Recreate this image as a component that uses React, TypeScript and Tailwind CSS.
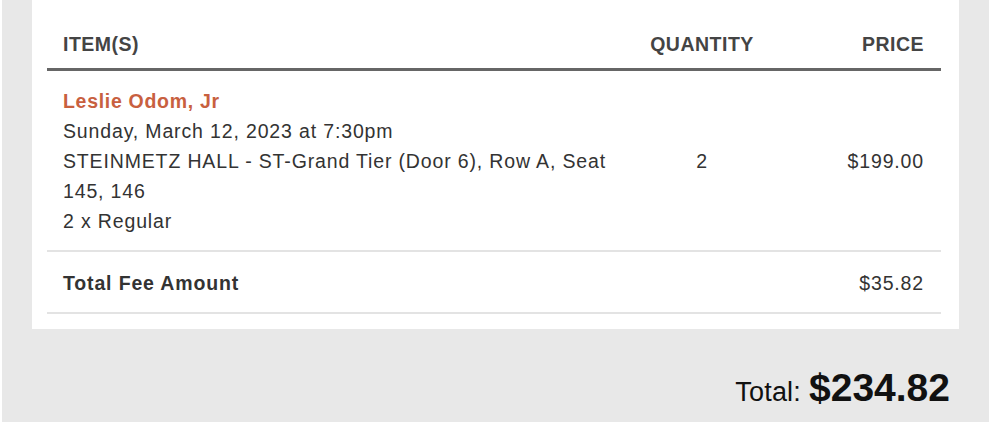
import React from "react";

const body = "text-[19.5px] leading-[30px] tracking-[0.85px] text-[#333]";

export default function App() {
  return (
    <div className="w-[1000px] h-[422px] bg-white pl-[2px] pr-[11px] font-['Liberation_Sans',Arial,sans-serif]">
      <div className="h-full bg-[#e8e8e8] px-[30px] flex flex-col">
        {/* Order card */}
        <div className="bg-white pl-[15px] pr-[18px] pb-[15px]">
          {/* Header */}
          <div className="grid grid-cols-[558px_162px_1fr] pl-[16px] pr-[17px] pt-[32px] pb-[12px] border-b-[3px] border-[#666] text-[19.5px] leading-[24px] tracking-[0.5px] font-bold text-[#444]">
            <div>ITEM(S)</div>
            <div className="text-center">QUANTITY</div>
            <div className="text-right">PRICE</div>
          </div>

          {/* Ticket row */}
          <div className="grid grid-cols-[558px_162px_1fr] items-center pl-[16px] pr-[17px] pt-[15px] pb-[14px] border-b-2 border-[#e3e3e3]">
            <div className={body}>
              <div className="font-bold text-[#c8603f] tracking-[0.7px]">Leslie Odom, Jr</div>
              <div>Sunday, March 12, 2023 at 7:30pm</div>
              <div>STEINMETZ HALL - ST-Grand Tier (Door 6), Row A, Seat 145, 146</div>
              <div>2 x Regular</div>
            </div>
            <div className={`${body} text-center`}>2</div>
            <div className={`${body} text-right tracking-[0.3px]`}>$199.00</div>
          </div>

          {/* Fees */}
          <div className="flex items-center justify-between pl-[16px] pr-[17px] pt-[16px] pb-[14px] border-b-2 border-[#e3e3e3]">
            <div className={`${body} font-bold text-[#222] tracking-[0.6px]`}>Total Fee Amount</div>
            <div className={`${body} tracking-[0.3px]`}>$35.82</div>
          </div>
        </div>

        {/* Grand total */}
        <div className="flex justify-end pr-[9px] pt-[39px]">
          <div className="flex items-baseline gap-[8px] text-[#111] leading-none">
            <span className="text-[27px] tracking-[0.2px]">Total:</span>
            <span className="text-[39px] font-bold">$234.82</span>
          </div>
        </div>
      </div>
    </div>
  );
}
